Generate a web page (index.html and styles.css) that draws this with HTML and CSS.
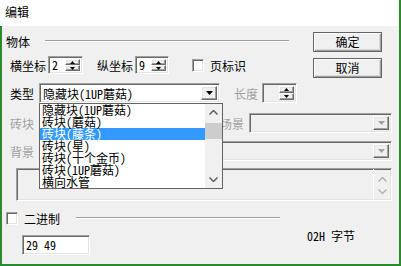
FILE: index.html
```html
<!DOCTYPE html>
<html lang="zh-CN">
<head>
  <meta charset="UTF-8">
  <title>编辑</title>
  <link rel="stylesheet" href="styles.css">
</head>
<body>
  <div class="window">
    <div class="titlebar">编辑</div>
    <div class="dialog">
      <div class="top">
        <div class="object">
          <div class="group-head">
            <span>物体</span>
            <span class="rule"></span>
          </div>
          <div class="row coords">
            <span>横坐标</span>
            <div class="field spin spin-x">
              <span class="value">2</span>
              <span class="spin-btns">
                <span class="raised"><svg width="5" height="3"><polygon points="2.5,0 5,3 0,3" fill="#000"/></svg></span>
                <span class="raised"><svg width="5" height="3"><polygon points="0,0 5,0 2.5,3" fill="#000"/></svg></span>
              </span>
            </div>
            <span class="gap-y">纵坐标</span>
            <div class="field spin spin-y">
              <span class="value">9</span>
              <span class="spin-btns">
                <span class="raised"><svg width="5" height="3"><polygon points="2.5,0 5,3 0,3" fill="#000"/></svg></span>
                <span class="raised"><svg width="5" height="3"><polygon points="0,0 5,0 2.5,3" fill="#000"/></svg></span>
              </span>
            </div>
            <span class="field check page-check"></span>
            <span class="check-label">页标识</span>
          </div>
        </div>
        <div class="buttons">
          <div class="btn">确定</div>
          <div class="btn">取消</div>
        </div>
      </div>

      <div class="row type">
        <span>类型</span>
        <div class="field combo combo-type">
          <span class="value">隐藏块(1UP蘑菇)</span>
          <span class="raised arrow"><svg width="7" height="4"><polygon points="0,0 7,0 3.5,4" fill="#000"/></svg></span>
        </div>
        <span class="muted len-label">长度</span>
        <div class="field spin spin-len disabled">
          <span class="value"></span>
          <span class="spin-btns">
            <span class="raised"><svg width="5" height="3"><polygon points="2.5,0 5,3 0,3" fill="#000"/></svg></span>
            <span class="raised"><svg width="5" height="3"><polygon points="0,0 5,0 2.5,3" fill="#000"/></svg></span>
          </span>
        </div>
      </div>

      <div class="row brick">
        <span class="muted">砖块</span>
        <span class="muted scene-label">场景</span>
        <div class="field combo combo-scene disabled">
          <span class="value"></span>
          <span class="raised arrow"><svg width="7" height="4"><polygon points="0,0 7,0 3.5,4" fill="#a0a0a0"/></svg></span>
        </div>
      </div>

      <div class="row bg">
        <span class="muted">背景</span>
        <div class="field combo combo-bg disabled">
          <span class="value"></span>
          <span class="raised arrow"><svg width="7" height="4"><polygon points="0,0 7,0 3.5,4" fill="#a0a0a0"/></svg></span>
        </div>
      </div>

      <div class="field memo">
        <div class="memo-scroll">
          <svg width="9" height="5"><polyline points="0.5,4.5 4.5,0.5 8.5,4.5" fill="none" stroke="#b4b4b4" stroke-width="1.5"/></svg>
          <svg width="9" height="5"><polyline points="0.5,0.5 4.5,4.5 8.5,0.5" fill="none" stroke="#b4b4b4" stroke-width="1.5"/></svg>
        </div>
      </div>

      <div class="group-head binary">
        <span class="field check"></span>
        <span class="check-label">二进制</span>
        <span class="rule"></span>
      </div>

      <div class="row bytes">
        <div class="field text-input">29 49</div>
        <span class="byte-count">02H 字节</span>
      </div>

      <ul class="droplist">
        <li>隐藏块(1UP蘑菇)</li>
        <li>砖块(蘑菇)</li>
        <li class="selected">砖块(藤条)</li>
        <li>砖块(星)</li>
        <li>砖块(十个金币)</li>
        <li>砖块(1UP蘑菇)</li>
        <li>横向水管</li>
        <li class="scrollbar">
          <svg width="9" height="5"><polyline points="0.5,4.5 4.5,0.5 8.5,4.5" fill="none" stroke="#606060" stroke-width="1.5"/></svg>
          <span class="thumb"></span>
          <svg width="9" height="5"><polyline points="0.5,0.5 4.5,4.5 8.5,0.5" fill="none" stroke="#606060" stroke-width="1.5"/></svg>
        </li>
      </ul>
    </div>
  </div>
</body>
</html>
```

FILE: styles.css
```css
body {
  margin: 0;
  font-family: "Noto Sans Mono CJK SC", "Noto Sans CJK SC", "Liberation Mono", monospace;
  font-size: 12px;
  color: #000;
  background: #fff;
}

.window {
  width: 401px;
  height: 266px;
  box-sizing: border-box;
  border-right: 2px solid #2b8a2b;
  overflow: hidden;
}

.titlebar {
  height: 26px;
  line-height: 24px;
  padding-left: 5px;
  background: #fff;
}

.dialog {
  position: relative;
  height: 238px;
  background: #f0f0f0;
  border-left: 2px solid #2b8a2b;
  border-bottom: 2px solid #2b8a2b;
}

/* sunken and raised edges */
.field {
  box-sizing: border-box;
  background: #fff;
  border: 1px solid;
  border-color: #a0a0a0 #fff #fff #a0a0a0;
  box-shadow: inset 1px 1px #696969, inset -1px -1px #e3e3e3;
}

.field.disabled {
  background: #f0f0f0;
}

.raised {
  box-sizing: border-box;
  display: flex;
  align-items: center;
  justify-content: center;
  background: #f0f0f0;
  border: 1px solid;
  border-color: #fff #696969 #696969 #fff;
  box-shadow: inset -1px -1px #a0a0a0, inset 1px 1px #e3e3e3;
}

.muted {
  color: #a0a0a0;
}

.row {
  display: flex;
  align-items: center;
  height: 20px;
  padding-left: 8px;
}

.group-head {
  display: flex;
  align-items: center;
  height: 20px;
}

.rule {
  flex: 1;
  height: 0;
  border-top: 1px solid #a0a0a0;
  border-bottom: 1px solid #fff;
}

/* top block */
.top {
  display: flex;
  height: 52px;
}

.object {
  width: 287px;
}

.object .group-head {
  margin-top: 5px;
  padding-left: 4px;
}

.object .group-head .rule {
  margin-left: 15px;
}

.coords {
  margin-top: 5px;
  height: 18px;
}

.spin {
  display: flex;
  align-items: stretch;
  height: 18px;
  margin-left: 2px;
}

.spin .value {
  flex: 1;
  padding: 0 3px;
  line-height: 15px;
}

.spin-btns {
  display: flex;
  flex-direction: column;
  width: 15px;
  padding: 2px 2px 2px 0;
}

.spin-btns .raised {
  flex: 1;
}

.spin-x {
  width: 35px;
}

.spin-y {
  width: 34px;
}

.gap-y {
  margin-left: 14px;
}

.check {
  width: 12px;
  height: 13px;
}

.page-check {
  margin-left: 23px;
}

.check-label {
  margin-left: 6px;
}

.buttons {
  display: flex;
  flex-direction: column;
  gap: 6px;
  margin-left: 24px;
  margin-top: 6px;
}

.btn {
  box-sizing: border-box;
  width: 69px;
  height: 20px;
  line-height: 17px;
  text-align: center;
  background: #f0f0f0;
  border: 1px solid #646464;
  box-shadow: inset 1px 1px #fff, inset -1px -1px #a0a0a0, inset -2px -2px #d8d8d8;
}

/* combos */
.combo {
  display: flex;
  align-items: stretch;
  height: 20px;
  padding: 2px;
}

.combo .value {
  flex: 1;
  padding-left: 1px;
  line-height: 15px;
}

.combo .arrow {
  width: 16px;
}

.type {
  margin-top: 5px;
}

.combo-type {
  width: 181px;
  margin-left: 5px;
}

.len-label {
  margin-left: 14px;
}

.spin-len {
  width: 35px;
  height: 20px;
  margin-left: 4px;
}

.brick {
  margin-top: 10px;
}

.scene-label {
  margin-left: 186px;
}

.combo-scene {
  width: 143px;
  margin-left: 5px;
}

.bg {
  margin-top: 8px;
}

.combo-bg {
  width: 353px;
  margin-left: 5px;
}

.memo {
  display: flex;
  justify-content: flex-end;
  width: 376px;
  height: 33px;
  margin: 7px 0 0 14px;
  background: #f0f0f0;
}

.memo-scroll {
  display: flex;
  flex-direction: column;
  justify-content: space-between;
  align-items: center;
  width: 17px;
  padding: 8px 0 6px;
  border-left: 1px solid #fff;
}

.binary {
  width: 274px;
  height: 16px;
  margin-top: 9px;
  padding-left: 4px;
}

.binary .rule {
  margin-left: 16px;
}

.bytes {
  margin-top: 9px;
  padding-left: 20px;
  align-items: flex-start;
}

.text-input {
  width: 68px;
  height: 20px;
  padding: 1px 3px;
  line-height: 16px;
}

.byte-count {
  margin-left: 217px;
  margin-top: -5px;
  line-height: 12px;
}

/* open drop-down list, drawn over the form */
.droplist {
  position: absolute;
  left: 37px;
  top: 77px;
  width: 184px;
  height: 86px;
  box-sizing: border-box;
  margin: 0;
  padding: 0 17px 0 0;
  list-style: none;
  background: #fff;
  border: 1px solid #646464;
}

.droplist li {
  height: 12px;
  line-height: 12px;
  padding-left: 2px;
  white-space: nowrap;
}

.droplist li.selected {
  background: #3399ff;
  color: #fff;
}

.droplist .scrollbar {
  position: absolute;
  top: 0;
  right: 0;
  width: 17px;
  height: 84px;
  padding: 0;
  display: flex;
  flex-direction: column;
  align-items: center;
  background: #f0f0f0;
}

.scrollbar svg {
  margin: 6px 0;
}

.scrollbar .thumb {
  width: 17px;
  height: 16px;
  margin-bottom: auto;
  margin-top: 2px;
  background: #cdcdcd;
}
```
